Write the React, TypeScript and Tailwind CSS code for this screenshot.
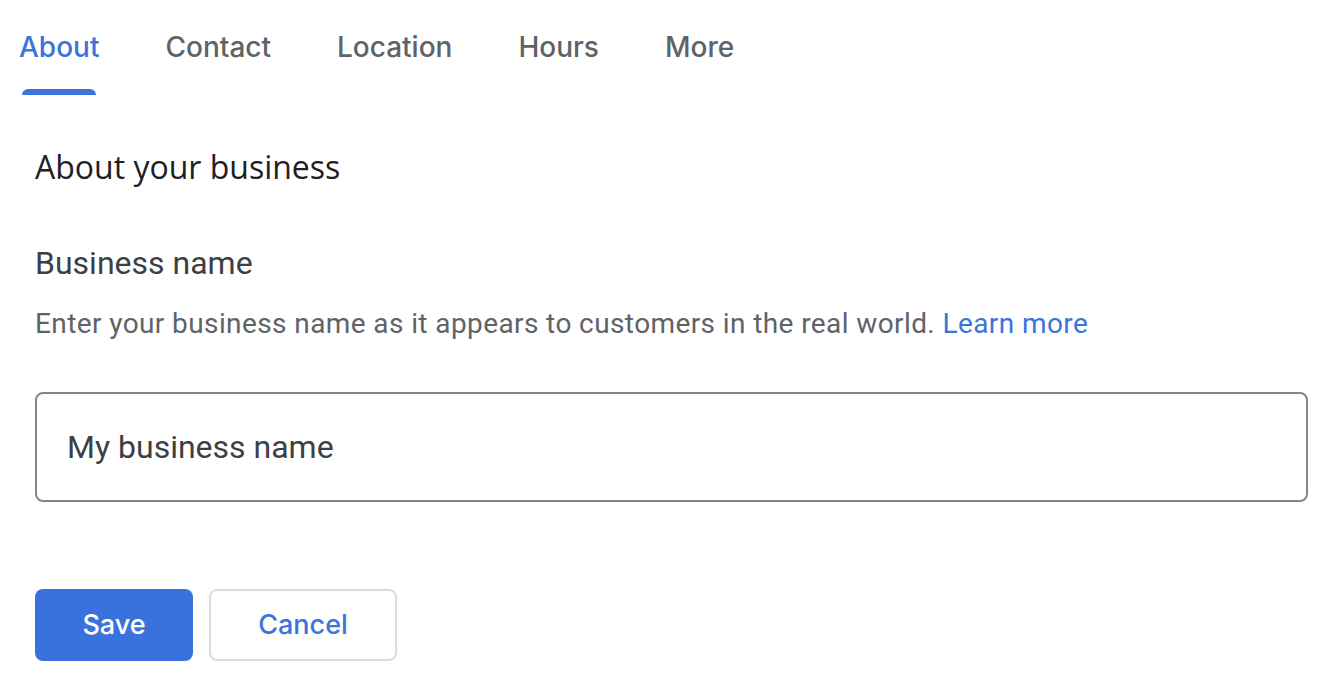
const tabs = ["About", "Contact", "Location", "Hours", "More"];

const heading = { fontFamily: '"Open Sans", "Liberation Sans", sans-serif' };
const medium = { fontFamily: 'Inter, "Open Sans", sans-serif' };

export default function App() {
  const active = "About";

  return (
    <div className="min-h-screen w-full bg-white font-['Roboto','Liberation_Sans',sans-serif]">
      {/* Tabs */}
      <nav className="flex h-[95px] gap-[66px] pl-[19px]">
        {tabs.map((t) => (
          <div key={t} className="flex h-full flex-col pt-[30px]">
            <span
              style={medium}
              className={`text-[28px] leading-[34px] font-medium ${
                t === active ? "text-[#3b74db]" : "text-[#5f6368]"
              }`}
            >
              {t}
            </span>
            {t === active && <div className="mx-[3px] mt-auto h-[6px] rounded-t-[6px] bg-[#3b74db]" />}
          </div>
        ))}
      </nav>

      <main className="px-[35px]">
        <h2 style={heading} className="mt-[52px] text-[32px] leading-[40px] font-normal text-[#202124]">
          About your business
        </h2>

        <h3 className="mt-[56px] text-[32px] leading-[40px] text-[#3c4043]">Business name</h3>
        <p className="mt-[23px] text-[28px] leading-[36px] tracking-[0.4px] text-[#5f6368]">
          Enter your business name as it appears to customers in the real world.{" "}
          <a className="text-[#3b74db]">Learn more</a>
        </p>

        <div className="mt-[50px] flex h-[110px] w-[1273px] items-center rounded-[8px] border-2 border-[#80868b] pl-[30px]">
          <span className="text-[32px] text-[#3c4043]">My business name</span>
        </div>

        <div className="mt-[87px] flex gap-[16px]">
          <button
            style={medium}
            className="flex h-[72px] w-[158px] items-center justify-center rounded-[8px] bg-[#3a72dd] text-[27px] font-medium text-white"
          >
            Save
          </button>
          <button
            style={medium}
            className="flex h-[72px] w-[188px] items-center justify-center rounded-[8px] border-2 border-[#dadce0] bg-white text-[27px] font-medium text-[#3b74db]"
          >
            Cancel
          </button>
        </div>
      </main>
    </div>
  );
}
